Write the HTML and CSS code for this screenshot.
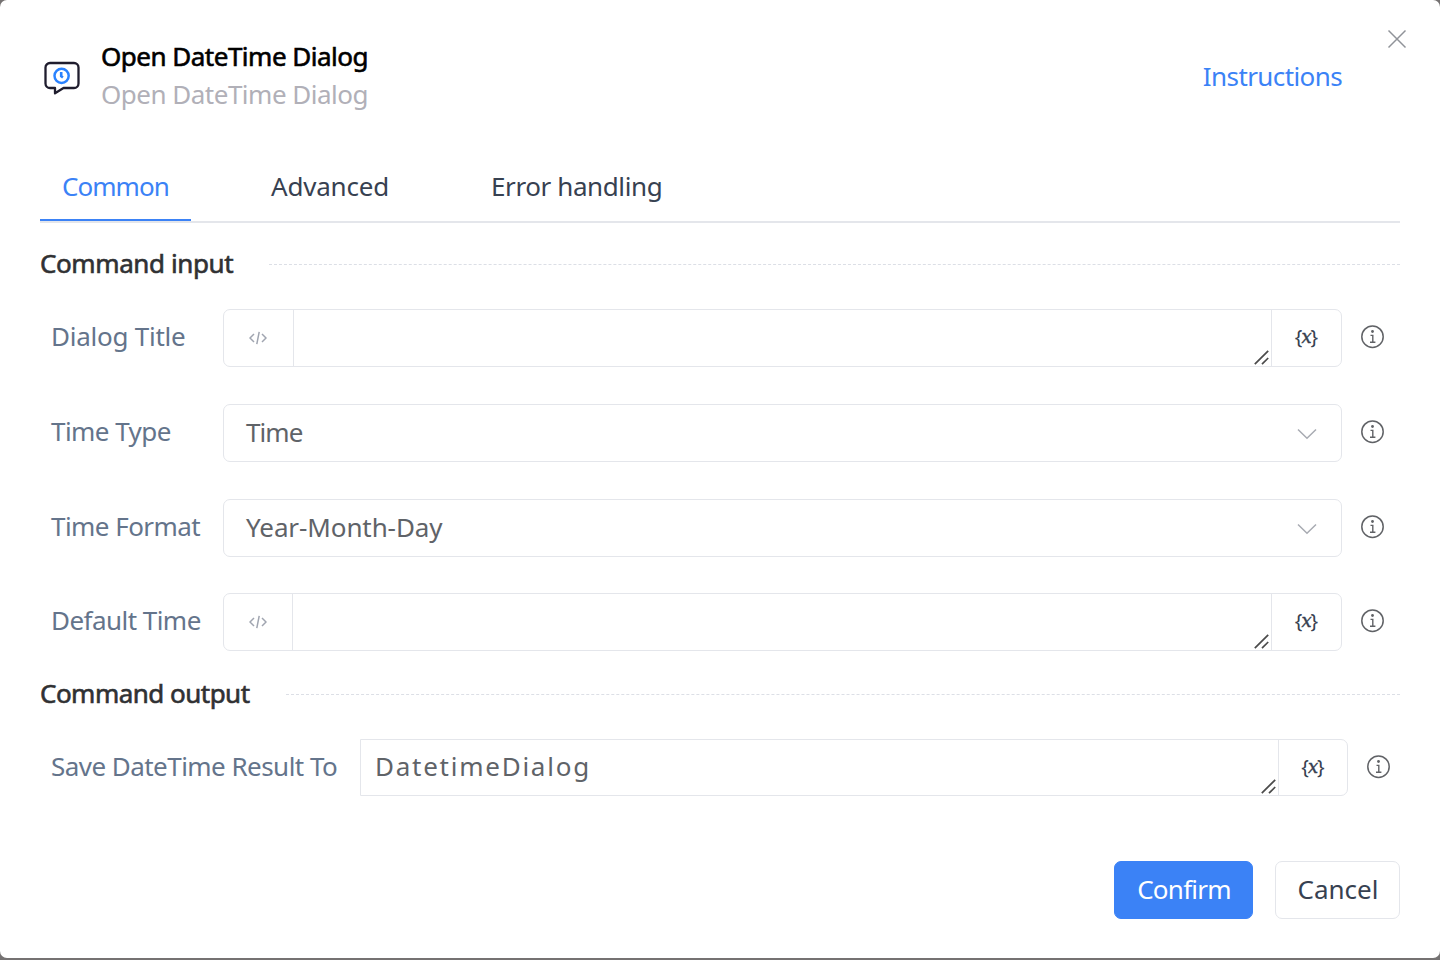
FILE: index.html
```html
<!DOCTYPE html>
<html lang="en">
<head>
<meta charset="utf-8">
<title>Open DateTime Dialog</title>
<link rel="stylesheet" href="styles.css">
</head>
<body>
<svg class="defs" width="0" height="0">
  <symbol id="info" viewBox="0 0 24 24"><circle cx="12.500" cy="11.700" r="10.700" fill="none" stroke="currentColor" stroke-width="1.500"/><path d="M10.500 10.400h2.300v6.800M10 17.300h5.400" fill="none" stroke="currentColor" stroke-width="1.400"/><circle cx="12.500" cy="6.500" r="1.400" fill="currentColor"/></symbol>
  <symbol id="code" viewBox="0 0 18 14"><path d="M5 3 1 7l4 4M13 3l4 4-4 4M10.200.800 7.800 13.200" fill="none" stroke="currentColor" stroke-width="1.500"/></symbol>
  <symbol id="chev" viewBox="0 0 20 12"><path d="m1 1.500 9 8.700 9-8.700" fill="none" stroke="currentColor" stroke-width="1.500"/></symbol>
  <symbol id="grip" viewBox="0 0 15 15"><path d="M.800 14.200 14.200.800M8 14.200l6.200-6.200" fill="none" stroke="currentColor" stroke-width="1.700"/></symbol>
</svg>
<main class="dialog">
  <header class="head">
    <svg class="logo" viewBox="0 0 36 34"><path d="M6 2h24a4.500 4.500 0 0 1 4.500 4.500V22.500a4.500 4.500 0 0 1-4.500 4.500H19.500L11 32.300V27H6a4.500 4.500 0 0 1-4.500-4.500V6.500a4.500 4.500 0 0 1 4.500-4.500z" fill="none" stroke="#1f1d2e" stroke-width="2.300" stroke-linejoin="round"/><circle cx="17.600" cy="14.800" r="7.100" fill="none" stroke="#2a82ff" stroke-width="2.500"/><path d="M17.200 11v4.200l1.700 1.300" fill="none" stroke="#2a82ff" stroke-width="2.600"/></svg>
    <div class="titles"><h1 class="title">Open DateTime Dialog</h1><p class="subtitle">Open DateTime Dialog</p></div>
    <a class="link">Instructions</a>
    <svg class="close" viewBox="0 0 20 20"><path d="m1.500 1.500 17 17m0-17-17 17" stroke="currentColor" stroke-width="1.500"/></svg>
  </header>
  <nav class="tabs"><a class="tab active">Common</a><a class="tab advanced">Advanced</a><a class="tab errors">Error handling</a></nav>
  <h2 class="section"><span class="section-in">Command input</span></h2>
  <div class="row">
    <label class="label title-label"><span>Dialog Title</span></label>
    <div class="field"><div class="code"><svg><use href="#code"/></svg></div><div class="area"><svg class="grip"><use href="#grip"/></svg></div><div class="var">{<i>x</i>}</div></div>
    <svg class="info"><use href="#info"/></svg>
  </div>
  <div class="row">
    <label class="label"><span>Time Type</span></label>
    <div class="field select"><span class="time">Time</span><svg class="chev"><use href="#chev"/></svg></div>
    <svg class="info"><use href="#info"/></svg>
  </div>
  <div class="row">
    <label class="label"><span>Time Format</span></label>
    <div class="field select"><span class="format">Year-Month-Day</span><svg class="chev"><use href="#chev"/></svg></div>
    <svg class="info"><use href="#info"/></svg>
  </div>
  <div class="row last">
    <label class="label"><span>Default Time</span></label>
    <div class="field"><div class="code narrow"><svg><use href="#code"/></svg></div><div class="area"><svg class="grip"><use href="#grip"/></svg></div><div class="var">{<i>x</i>}</div></div>
    <svg class="info"><use href="#info"/></svg>
  </div>
  <h2 class="section"><span class="section-out">Command output</span></h2>
  <div class="row output">
    <label class="label"><span>Save DateTime Result To</span></label>
    <div class="field"><div class="area"><span class="value">DatetimeDialog</span><svg class="grip"><use href="#grip"/></svg></div><div class="var">{<i>x</i>}</div></div>
    <svg class="info"><use href="#info"/></svg>
  </div>
  <footer class="foot"><button class="btn primary">Confirm</button><button class="btn">Cancel</button></footer>
</main>
</body>
</html>
```

FILE: styles.css
```css
* { box-sizing: border-box; }
body { margin: 0; height: 960px; overflow: hidden; background: #757272; font: 26px/38px "Noto Sans", sans-serif; color: #374151; }
h1, h2, p { margin: 0; font-size: inherit; font-weight: 400; }
svg { display: block; flex: none; }
.defs { position: absolute; }
.dialog { height: 958px; padding: 0 40px; background: #fff; border-radius: 7px; display: flex; flex-direction: column; }
.head { height: 154px; padding: 37px 0 0 4px; display: flex; align-items: flex-start; position: relative; }
.logo { width: 36px; height: 34px; margin: 24px 0 0 -.5px; }
.titles { margin-left: 21.5px; flex: 1; white-space: nowrap; letter-spacing: -.5px; }
.title { color: #000; -webkit-text-stroke: .6px #000; }
.subtitle { color: #b1b0b8; }
.link { color: #3b82f6; margin: 20px 58px 0 0; letter-spacing: -.6px; }
.close { position: absolute; right: -6.5px; top: 29.3px; width: 20px; height: 20px; color: #909399; }
.tabs { height: 69px; border-bottom: 2px solid #e4e6eb; display: flex; gap: 58px; }
.tab { height: 67px; padding: 13px 22px 0; white-space: nowrap; }
.tab.active { width: 151px; color: #3b82f6; border-bottom: 2px solid #3b82f6; letter-spacing: -.95px; }
.advanced { letter-spacing: -.2px; }
.errors { letter-spacing: -.4px; }
.section { height: 38px; margin-top: 22px; display: flex; align-items: center; gap: 36px; color: #303133; -webkit-text-stroke: .6px #303133; white-space: nowrap; }
.section::after { content: ""; flex: 1; border-top: 1px dashed #dcdfe6; }
.section span { padding-bottom: 2px; }
.section-in { letter-spacing: -.4px; }
.section-out { letter-spacing: -.52px; }
.row { height: 58px; margin: 26px 0 11px; display: flex; align-items: center; }
.row.last { margin: 25px 0 2px; }
.label { width: 183px; padding: 0 0 4px 11px; color: #64748b; white-space: nowrap; letter-spacing: -.54px; }
.title-label { letter-spacing: -.25px; }
.field { width: 1119px; height: 58px; border: 1px solid #e4e6eb; border-radius: 7px; display: flex; color: #5f6368; }
.code { width: 70px; border-right: 1px solid #e4e6eb; display: grid; place-items: center; color: #a0a5b0; }
.code.narrow { width: 69px; }
.code svg { width: 18px; height: 14px; margin-right: 1px; }
.area { flex: 1; display: flex; justify-content: flex-end; align-items: flex-end; padding: 0 2px 1px 0; }
.grip { width: 15px; height: 15px; color: #4b4b4b; }
.var { width: 70px; border-left: 1px solid #e4e6eb; display: flex; justify-content: center; font-size: 20px; line-height: 54px; color: #374151; }
.var i { font: italic 18px/54px "DejaVu Serif", serif; margin: 0 -1px; -webkit-text-stroke: .4px #374151; }
.select { align-items: center; padding: 0 24px 2px 22px; justify-content: space-between; }
.time { letter-spacing: -.9px; }
.format { letter-spacing: -.1px; }
.chev { width: 20px; height: 12px; margin-top: 4px; color: #a8abb2; }
.info { width: 24px; height: 24px; margin: 0 0 2px 18px; color: #606266; overflow: visible; }
.row.output { height: 57px; margin-top: 26px; }
.output .label { width: 320px; padding-bottom: 3px; }
.output .field { width: 988px; height: 57px; border-radius: 0 7px 7px 0; }
.output .var { width: 69px; }
.output .info { margin-bottom: 1px; }
.value { align-self: center; padding: 0 0 2px 14px; margin-right: auto; letter-spacing: 1.75px; }
.foot { margin-top: auto; padding-bottom: 39px; display: flex; justify-content: flex-end; gap: 22px; }
.btn { height: 58px; width: 125px; padding: 0 0 2px 1px; font: inherit; color: #374151; background: #fff; border: 1px solid #e4e6eb; border-radius: 7px; }
.btn.primary { width: 139px; color: #fff; background: #3b82f6; border-color: #3b82f6; letter-spacing: -.75px; }
```
